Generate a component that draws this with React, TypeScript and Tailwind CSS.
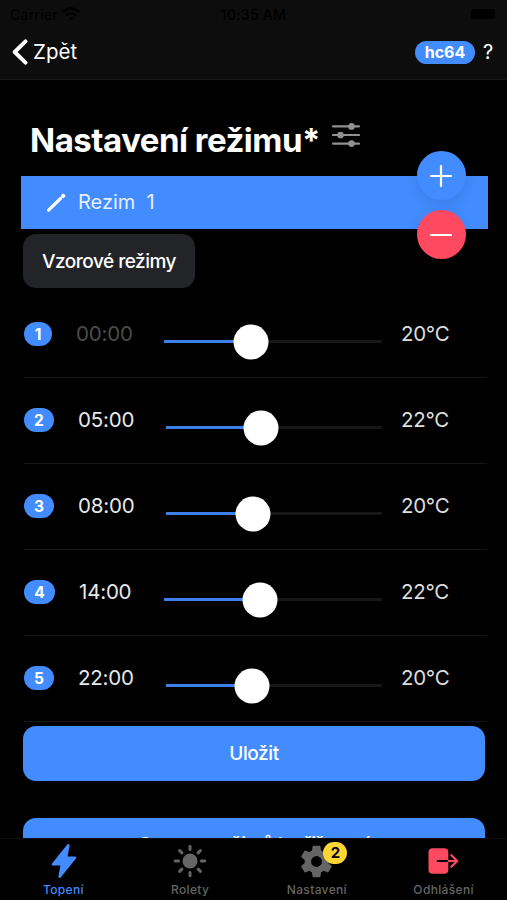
import type { ReactNode } from 'react';
import { IoFlash, IoSettingsSharp } from 'react-icons/io5';
import { clsx } from 'clsx';

type Slot = {
  id: number;
  time: string;
  temp: number;
  start: string;
  badge: string;
  value: number;
  disabled?: boolean;
};

const slots: Slot[] = [
  { id: 1, time: '00:00', temp: 20, start: 'ml-[164px]', badge: 'w-7', value: 39.9, disabled: true },
  { id: 2, time: '05:00', temp: 22, start: 'ml-[166px]', badge: 'w-[30px]', value: 44.2 },
  { id: 3, time: '08:00', temp: 20, start: 'ml-[166px]', badge: 'w-[30px]', value: 40.3 },
  { id: 4, time: '14:00', temp: 22, start: 'ml-[164px]', badge: 'w-[31px]', value: 43.9 },
  { id: 5, time: '22:00', temp: 20, start: 'ml-[166px]', badge: 'w-[30px]', value: 40 },
];

function StatusBar() {
  return (
    <div className="grid h-7 grid-cols-3 items-center px-2.5 text-[14px] tracking-[0.3px] text-black">
      <span className="flex items-center gap-1">
        Carrier
        <svg viewBox="0 0 18 14" className="h-3.5 w-[18px]" fill="none" stroke="currentColor" strokeWidth="2.6">
          <path d="M1 5 Q9 -2 17 5 M4 8.5 Q9 4 14 8.5" />
          <path d="M6.5 11 Q9 8.8 11.5 11 L9 13.5Z" fill="currentColor" stroke="none" />
        </svg>
      </span>
      <span className="text-center font-medium">10:35 AM</span>
      <span className="mr-0.5 h-2.5 w-6 justify-self-end rounded-[3px] bg-black" />
    </div>
  );
}

function Header() {
  return (
    <header className="h-20 shrink-0 border-b border-[#191919] bg-[#0d0d0d]">
      <StatusBar />
      <div className="flex h-12 items-center pl-3 pr-[13px]">
        <button className="flex items-center gap-[5px] text-[20.5px] text-white">
          <svg viewBox="0 0 16 26" className="h-[26px] w-4" fill="none" stroke="currentColor" strokeWidth="3.9" strokeLinecap="round" strokeLinejoin="round">
            <path d="M13.5 2.3 L2.7 13 L13.5 23.7" />
          </svg>
          Zpět
        </button>
        <span className="ml-auto flex h-[23px] w-[60px] items-center justify-center rounded-full bg-[#428cff] text-[16px] font-bold">
          hc64
        </span>
        <button className="ml-[7px] w-3 text-[20px]">?</button>
      </div>
    </header>
  );
}

function SunIcon() {
  return (
    <svg viewBox="0 0 36 36" className="size-9" fill="none" stroke="currentColor" strokeWidth="3" strokeLinecap="round">
      <circle cx="18" cy="18" r="7.5" fill="currentColor" stroke="none" />
      <path d="M18 3.2V6.6M18 29.4V32.8M3.2 18H6.6M29.4 18H32.8" />
      <path d="M7.6 7.6L9.9 9.9M26.1 26.1L28.4 28.4M7.6 28.4L9.9 26.1M26.1 9.9L28.4 7.6" />
    </svg>
  );
}

function ExitIcon() {
  return (
    <svg viewBox="0 0 36 36" className="size-9" fill="none" strokeLinecap="round" strokeLinejoin="round">
      <rect x="2.5" y="5.3" width="19.8" height="25.4" rx="4" fill="currentColor" />
      <path d="M11.8 18H21.5" stroke="black" strokeWidth="2.2" />
      <path d="M22.6 18H31M25.4 12.2L31.2 18L25.4 23.8" stroke="currentColor" strokeWidth="2.2" />
    </svg>
  );
}

function FabButton({ className, children }: { className: string; children: ReactNode }) {
  return (
    <button className={clsx('flex size-[49px] items-center justify-center rounded-full shadow-[0_4px_14px_rgba(0,0,0,0.1)]', className)}>
      <svg viewBox="0 0 24 24" className="size-6" stroke="white" strokeWidth="2.2" strokeLinecap="round">
        {children}
      </svg>
    </button>
  );
}

function SlotRow({ slot }: { slot: Slot }) {
  return (
    <div className="ml-6 mr-5 h-[86px] border-b border-[#161616]">
      <div className="-ml-6 flex h-[84px] items-center">
        <div className="-mr-[164px] flex w-[164px] items-center pl-6">
          <span className={clsx('flex h-[23.5px] items-center justify-center rounded-full bg-[#428cff] pt-px text-[15.5px] font-bold', slot.badge)}>
            {slot.id}
          </span>
          <span className={clsx('ml-6 text-[20.5px] tracking-[-0.2px]', slot.disabled ? 'text-[#4c4c4c]' : 'text-[#e8e8e8]')}>
            {slot.time}
          </span>
        </div>
        <div className={clsx('relative mr-[19px] mt-[15px] h-[3px] flex-1 bg-[#171717]', slot.start)}>
          <div className="h-full bg-[#3c7fe8]" style={{ width: `${slot.value}%` }} />
          <div
            className="absolute top-1/2 size-[35px] -translate-x-1/2 -translate-y-1/2 rounded-full bg-white"
            style={{ left: `${slot.value}%` }}
          />
        </div>
        <span className="w-[86px] text-[20.5px] tracking-[-0.3px] text-[#dedede]">{slot.temp}°C</span>
      </div>
    </div>
  );
}

function TabItem({ label, color, labelColor, children }: { label: string; color: string; labelColor?: string; children: ReactNode }) {
  return (
    <button className={clsx('flex flex-1 flex-col items-center pt-1', color)}>
      <span className="relative flex h-9 items-center">{children}</span>
      <span className={clsx('mt-[3px] text-[12px] leading-4 font-medium tracking-[0.35px]', labelColor)}>{label}</span>
    </button>
  );
}

export default function App() {
  return (
    <div className="flex h-[900px] w-full flex-col overflow-hidden bg-black font-['Inter',sans-serif] text-white">
      <Header />

      <main className="min-h-0 flex-1 overflow-hidden">
        <div className="flex h-24 items-center pl-[30px] pt-[25px]">
          <h1 className="text-[33px] leading-none font-bold tracking-[-0.5px]">Nastavení režimu*</h1>
          <svg viewBox="0 0 28 24" className="mb-3 ml-3 h-6 w-7 text-[#919191]" fill="currentColor" stroke="currentColor" strokeWidth="2.1" strokeLinecap="round">
            <path d="M1 3.4H27M1 12H27M1 20.6H27" />
            <circle cx="19.5" cy="3.4" r="2.3" />
            <circle cx="8.5" cy="12" r="2.3" />
            <circle cx="19.5" cy="20.6" r="2.3" />
          </svg>
        </div>

        <div className="relative ml-[21px] mr-[19px] flex h-[53px] items-center bg-[#428cff] pl-[25px]">
          <svg viewBox="0 0 20 20" className="size-5" fill="none" stroke="currentColor" strokeWidth="3.2" strokeLinecap="round">
            <path d="M2.6 17.2 L14.4 5.6" />
            <path d="M16.9 3.2 L17.3 2.8" strokeWidth="4" />
          </svg>
          <span className="ml-3 pb-0.5 text-[20px] whitespace-pre text-[#e6efff]">Rezim  1</span>
          <div className="absolute -top-[25px] right-[22.5px] flex flex-col gap-2.5">
            <FabButton className="bg-[#428cff]">
              <path d="M12 2V22M2 12H22" />
            </FabButton>
            <FabButton className="bg-[#ff4961]">
              <path d="M2 12H22" />
            </FabButton>
          </div>
        </div>

        <button className="mt-[5px] ml-[23px] flex h-[54px] w-[172px] items-center justify-center rounded-[13px] bg-[#222428] pt-0.5 text-[19px] font-medium tracking-[-0.5px]">
          Vzorové režimy
        </button>

        <div className="mt-1">
          {slots.map((slot) => (
            <SlotRow key={slot.id} slot={slot} />
          ))}
        </div>

        <div className="mt-1 mr-[22px] ml-[23px] flex flex-col gap-[37px] text-[19px] font-medium tracking-[-0.4px]">
          <button className="h-[54.5px] rounded-[13px] bg-[#428cff] pt-0.5">Uložit</button>
          <button className="h-[54px] rounded-[13px] bg-[#428cff] pt-0.5">Seznam režimů k přiřazení</button>
        </div>
      </main>

      <nav className="flex h-[62px] shrink-0 border-t border-[#0e0e0e] bg-black">
        <TabItem label="Topení" color="text-[#428cff]">
          <IoFlash className="ml-0.5 size-9" />
        </TabItem>
        <TabItem label="Rolety" color="text-[#656565]">
          <SunIcon />
        </TabItem>
        <TabItem label="Nastavení" color="text-[#656565]">
          <IoSettingsSharp className="size-[35px]" />
          <span className="absolute -top-px left-6 flex h-[22px] w-6 items-center justify-center rounded-full bg-[#ffd534] text-[15px] font-bold text-black">
            2
          </span>
        </TabItem>
        <TabItem label="Odhlášení" color="text-[#ff4961]" labelColor="text-[#656565]">
          <ExitIcon />
        </TabItem>
      </nav>
    </div>
  );
}
